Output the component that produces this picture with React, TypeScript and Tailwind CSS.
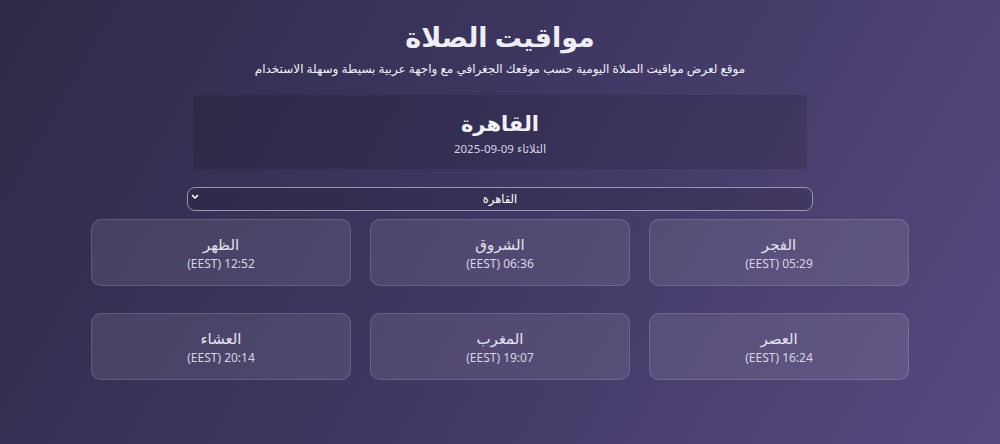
const prayers = [
  { name: "الفجر", time: "05:29" },
  { name: "الشروق", time: "06:36" },
  { name: "الظهر", time: "12:52" },
  { name: "العصر", time: "16:24" },
  { name: "المغرب", time: "19:07" },
  { name: "العشاء", time: "20:14" },
];

export default function App() {
  return (
    <div
      dir="rtl"
      className="min-h-[444px] w-full bg-[linear-gradient(120deg,#2e2b47_0%,#3d3660_45%,#58497f_100%)] text-white font-['Noto_Sans','DejaVu_Sans',sans-serif]"
    >
      <div className="flex flex-col items-center pt-[15px]">
        <h1 className="text-[27px] font-bold leading-[44px] text-[#eeeef6]">مواقيت الصلاة</h1>
        <p className="mt-[1px] text-[12px] leading-[18px] text-[#f0eff7]">
          موقع لعرض مواقيت الصلاة اليومية حسب موقعك الجغرافي مع واجهة عربية بسيطة وسهلة الاستخدام
        </p>

        <div className="mt-[17px] flex h-[74px] w-[614px] flex-col items-center justify-center rounded-[3px] bg-[#000]/[0.12]">
          <h2 className="text-[21px] font-bold leading-[30px] text-[#f2f1f8]">القاهرة</h2>
          <div className="mt-[3px] text-[11.5px] leading-[16px] text-[#d4d1e2]">
            الثلاثاء <span dir="ltr">2025-09-09</span>
          </div>
        </div>

        <div className="relative mt-[16px] w-[626px]">
          <select
            defaultValue="cairo"
            className="h-[24px] w-full appearance-none rounded-[8px] border border-[#9a95b0] bg-[#000]/[0.12] text-center text-[11.5px] text-white outline-none"
          >
            <option value="cairo">القاهرة</option>
          </select>
          <svg
            className="pointer-events-none absolute left-[4px] top-[8px]"
            width="8"
            height="8"
            viewBox="0 0 8 8"
            fill="none"
            stroke="white"
            strokeWidth="1.6"
            strokeLinecap="round"
            strokeLinejoin="round"
          >
            <path d="M1.5 2.5 4 5 6.5 2.5" />
          </svg>
        </div>

        <div className="mt-[8px] grid w-[818px] grid-cols-3 gap-x-[19px] gap-y-[27px]">
          {prayers.map((p) => (
            <div
              key={p.name}
              className="flex h-[67px] flex-col items-center justify-center rounded-[10px] border border-white/[0.14] bg-white/[0.09]"
            >
              <div className="text-[15px] leading-[22px] text-[#e6e3f2]">{p.name}</div>
              <div className="mt-[1px] text-[12px] leading-[16px] text-[#d8d4e6]">
                {p.time} (EEST)
              </div>
            </div>
          ))}
        </div>
      </div>
    </div>
  );
}
